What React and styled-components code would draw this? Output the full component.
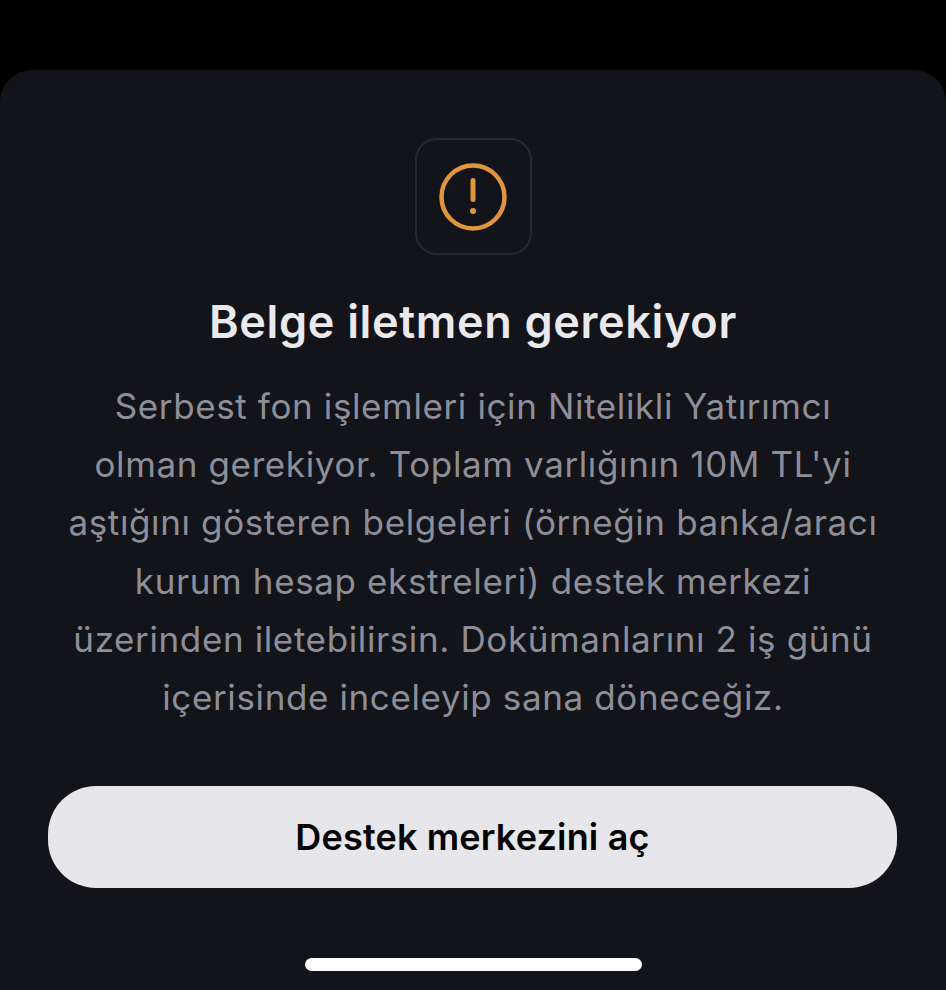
import React from "react";
import styled, { createGlobalStyle } from "styled-components";

const GlobalStyle = createGlobalStyle`
  html, body {
    margin: 0;
    padding: 0;
    background: #000;
  }
  body {
    font-family: "Inter", "Liberation Sans", sans-serif;
  }
`;

const Screen = styled.div`
  width: 946px;
  height: 990px;
  padding-top: 70px;
  box-sizing: border-box;
  background: #000;
  overflow: hidden;
`;

const Sheet = styled.div`
  height: 920px;
  box-sizing: border-box;
  padding-top: 68px;
  display: flex;
  flex-direction: column;
  align-items: center;
  background: #131419;
  border-radius: 32px 32px 0 0;
`;

const IconBox = styled.div`
  width: 117px;
  height: 117px;
  box-sizing: border-box;
  display: flex;
  align-items: center;
  justify-content: center;
  border: 2px solid #262833;
  border-radius: 22px;
`;

const Title = styled.h1`
  margin: 37px 0 0;
  font-size: 45px;
  line-height: 60px;
  font-weight: 600;
  letter-spacing: 0.66px;
  color: #e9e9ee;
  text-align: center;
`;

const Body = styled.p`
  margin: 25px 0 0;
  font-size: 35px;
  line-height: 58.2px;
  font-weight: 400;
  letter-spacing: 0.62px;
  color: #8e8e98;
  text-align: center;
  white-space: nowrap;
`;

const PrimaryButton = styled.button`
  width: 849px;
  height: 102px;
  margin-top: 60px;
  margin-right: 1px;
  border: 0;
  border-radius: 48px;
  background: #e6e6eb;
  color: #000;
  font-family: inherit;
  font-size: 36px;
  font-weight: 600;
  letter-spacing: 0.17px;
`;

const HomeIndicator = styled.div`
  width: 337px;
  height: 13px;
  margin-top: 70px;
  border-radius: 7px;
  background: #fff;
`;

const WarningIcon = () => (
  <svg width="68" height="68" viewBox="0 0 68 68" fill="none">
    <circle cx="34" cy="34" r="31.5" stroke="#e0963c" strokeWidth="4.5" />
    <path d="M34 17.5V36.5" stroke="#e0963c" strokeWidth="5" strokeLinecap="round" />
    <circle cx="34" cy="48" r="3" fill="#e0963c" />
  </svg>
);

const lines = [
  "Serbest fon işlemleri için Nitelikli Yatırımcı",
  "olman gerekiyor. Toplam varlığının 10M TL'yi",
  "aştığını gösteren belgeleri (örneğin banka/aracı",
  "kurum hesap ekstreleri) destek merkezi",
  "üzerinden iletebilirsin. Dokümanlarını 2 iş günü",
  "içerisinde inceleyip sana döneceğiz.",
];

const App = () => {
  return (
    <Screen>
      <GlobalStyle />
      <Sheet>
        <IconBox>
          <WarningIcon />
        </IconBox>
        <Title>Belge iletmen gerekiyor</Title>
        <Body>
          {lines.map((line) => (
            <React.Fragment key={line}>
              {line}
              <br />
            </React.Fragment>
          ))}
        </Body>
        <PrimaryButton>Destek merkezini aç</PrimaryButton>
        <HomeIndicator />
      </Sheet>
    </Screen>
  );
};

export default App;
